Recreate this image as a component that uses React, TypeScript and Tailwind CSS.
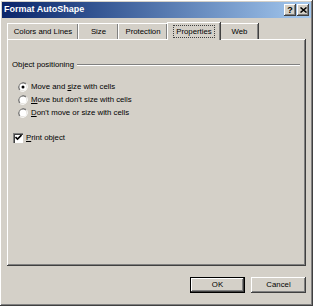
import React from 'react'

const raised =
  'shadow-[inset_-1px_-1px_#404040,inset_1px_1px_#ffffff,inset_-2px_-2px_#808080,inset_2px_2px_#d4d0c8]'

function Radio({ checked }: { checked?: boolean }): JSX.Element {
  return (
    <svg width="10" height="10" viewBox="0 0 12 12" className="shrink-0">
      <path d="M10.2 1.8A6 6 0 0 0 1.8 10.2" fill="none" stroke="#808080" strokeWidth="1" />
      <path d="M9.5 2.5A5 5 0 0 0 2.5 9.5" fill="none" stroke="#404040" strokeWidth="1" />
      <path d="M1.8 10.2A6 6 0 0 0 10.2 1.8" fill="none" stroke="#ffffff" strokeWidth="1" />
      <circle cx="6" cy="6" r="4.3" fill="#ffffff" />
      {checked && <circle cx="6" cy="6" r="1.8" fill="#000000" />}
    </svg>
  )
}

function Tab({ label, w, active }: { label: string; w: string; active?: boolean }): JSX.Element {
  return (
    <div
      className={`${w} flex items-center justify-center ${
        active
          ? 'relative z-10 -mb-[1px] h-[18px] bg-[#d4d0c8] border-t border-l border-white shadow-[inset_-1px_0_#808080,1px_0_#404040]'
          : 'h-[16px] border-t border-l border-white shadow-[inset_-1px_0_#808080,1px_0_#404040]'
      }`}
    >
      <span className={active ? 'px-[2px] outline outline-1 outline-dotted outline-[#404040] leading-[11px]' : 'leading-[11px]'}>
        {label}
      </span>
    </div>
  )
}

export default function App(): JSX.Element {
  return (
    <div
      className={`flex h-[306px] w-[313px] flex-col bg-[#d4d0c8] p-[2px] font-['Liberation_Sans',Arial,sans-serif] text-[7.8px] text-black ${raised}`}
    >
      <div className="flex h-[16px] items-center justify-between bg-gradient-to-r from-[#0a246a] to-[#a6caf0] pl-[2px] pr-[2px]">
        <span className="text-[9px] font-bold text-white">Format AutoShape</span>
        <div className="flex">
          <div className={`flex h-[12px] w-[12px] items-center justify-center bg-[#d4d0c8] text-[9px] font-bold leading-none ${raised}`}>
            ?
          </div>
          <div className={`ml-[1px] flex h-[12px] w-[12px] items-center justify-center bg-[#d4d0c8] ${raised}`}>
            <svg width="7" height="6" viewBox="0 0 7 6">
              <path d="M0.5 0.5L6.5 5.5M6.5 0.5L0.5 5.5" stroke="#000" strokeWidth="1.5" />
            </svg>
          </div>
        </div>
      </div>

      <div className="mx-[5px] mt-[5px] flex h-[16px] items-end">
        <Tab label="Colors and Lines" w="w-[71px]" />
        <Tab label="Size" w="w-[40px]" />
        <Tab label="Protection" w="w-[49px]" />
        <Tab label="Properties" w="w-[53px]" active />
        <Tab label="Web" w="w-[38px]" />
      </div>

      <div className={`mx-[5px] flex h-[227px] flex-col bg-[#d4d0c8] pl-[5px] pr-[6px] pt-[21px] ${raised}`}>
        <div className="flex h-[10px] items-center">
          <span className="leading-[10px]">Object positioning</span>
          <div className="ml-[3px] flex-1 border-t border-b border-t-[#808080] border-b-white" />
        </div>
        <div className="mt-[10px] ml-[6px] flex flex-col">
          <div className="flex h-[13px] items-center gap-[3px]">
            <Radio checked />
            <span>
              Move and <u>s</u>ize with cells
            </span>
          </div>
          <div className="flex h-[13px] items-center gap-[3px]">
            <Radio />
            <span>
              <u>M</u>ove but don't size with cells
            </span>
          </div>
          <div className="flex h-[13px] items-center gap-[3px]">
            <Radio />
            <span>
              <u>D</u>on't move or size with cells
            </span>
          </div>
        </div>
        <div className="mt-[12px] ml-[1px] flex h-[13px] items-center gap-[3px]">
          <div className="flex h-[10px] w-[10px] items-center justify-center bg-white shadow-[inset_1px_1px_#808080,inset_2px_2px_#404040,inset_-1px_-1px_#ffffff]">
            <svg width="7" height="7" viewBox="0 0 7 7">
              <path d="M0.5 3L2.5 5L6.5 1" fill="none" stroke="#000" strokeWidth="1.6" />
            </svg>
          </div>
          <span>
            <u>P</u>rint object
          </span>
        </div>
      </div>

      <div className="mx-[5px] mt-[11px] flex justify-end gap-[6px]">
        <div className="flex h-[16px] w-[55px] items-center justify-center border border-black bg-[#d4d0c8] shadow-[inset_-1px_-1px_#404040,inset_1px_1px_#ffffff,inset_-2px_-2px_#808080]">
          OK
        </div>
        <div className={`flex h-[16px] w-[55px] items-center justify-center bg-[#d4d0c8] ${raised}`}>Cancel</div>
      </div>
    </div>
  )
}
